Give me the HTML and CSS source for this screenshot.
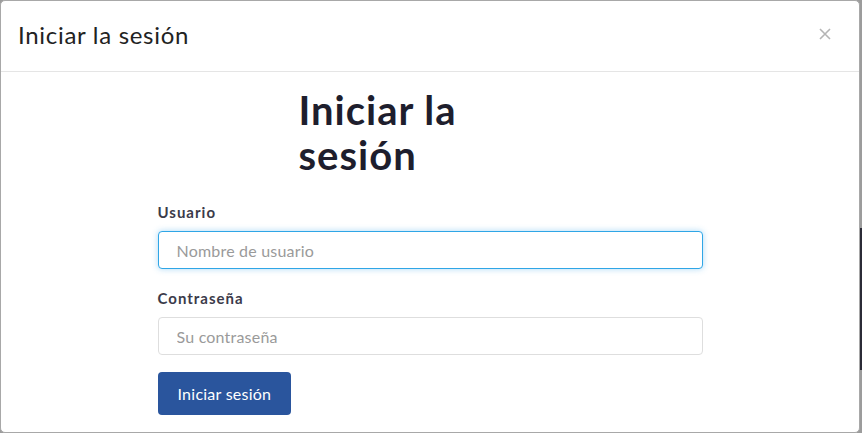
FILE: index.html
```html
<!DOCTYPE html>
<html lang="es">
<head>
    <meta charset="UTF-8">
    <meta name="viewport" content="width=device-width, initial-scale=1.0">
    <title>Iniciar la sesión</title>
    <link rel="stylesheet" href="styles.css">
</head>
<body>
    <div class="modal">
        <header class="modal-header">
            <h4 class="modal-title">Iniciar la sesión</h4>
            <button class="close" aria-label="Cerrar">
                <svg width="12" height="12" viewBox="0 0 12 12">
                    <path d="M1 1 L11 11 M11 1 L1 11" stroke="#b5b5b5" stroke-width="1.6" fill="none"/>
                </svg>
            </button>
        </header>

        <div class="modal-body">
            <div class="intro">
                <h1>Iniciar la sesión</h1>
            </div>

            <form class="login-form">
                <div class="field">
                    <label for="user">Usuario</label>
                    <input id="user" class="input focused" type="text" placeholder="Nombre de usuario">
                </div>
                <div class="field field-last">
                    <label for="pass">Contraseña</label>
                    <input id="pass" class="input" type="password" placeholder="Su contraseña">
                </div>
                <button type="button" class="btn-primary">Iniciar sesión</button>
            </form>
        </div>
    </div>

    <div class="backdrop-side">
        <div class="backdrop-dark"></div>
    </div>
</body>
</html>
```

FILE: styles.css
```css
body {
    margin: 0;
    height: 433px;
    overflow: hidden;
    display: flex;
    background: #9c9c9c;
    font-family: Lato, "Open Sans", sans-serif;
}
.modal {
    width: 860px;
    height: 433px;
    flex-shrink: 0;
    box-sizing: border-box;
    background: #fff;
    border: 1px solid #a8a8a8;
    border-radius: 5px;
    overflow: hidden;
}
.modal-header {
    height: 70px;
    padding: 0 28px 0 17px;
    display: flex;
    align-items: center;
    justify-content: space-between;
    border-bottom: 1px solid #e5e5e5;
}
.modal-title {
    margin: -3px 0 0;
    font-size: 24px;
    font-weight: 400;
    color: #222;
    letter-spacing: 0.7px;
}
.close {
    padding: 0;
    margin-top: -4px;
    border: none;
    background: none;
    cursor: pointer;
    display: flex;
}
.modal-body {
    padding-top: 16px;
}
.intro {
    width: 545px;
    margin: 0 auto;
    padding-left: 141px;
    box-sizing: border-box;
}
.intro h1 {
    margin: 0;
    max-width: 220px;
    font-size: 40px;
    line-height: 45px;
    font-weight: 700;
    letter-spacing: 1px;
    color: #1e1e2d;
}
.login-form {
    width: 545px;
    margin: 24px auto 0;
}
.field {
    margin-bottom: 19px;
}
.field-last {
    margin-bottom: 17px;
}
.field label {
    display: block;
    margin-bottom: 8px;
    font-size: 15px;
    line-height: 21px;
    font-weight: 700;
    letter-spacing: 1px;
    color: #3b3b4a;
}
.input {
    display: block;
    width: 100%;
    height: 38px;
    box-sizing: border-box;
    padding: 0 18px;
    font-family: Lato, "Open Sans", sans-serif;
    font-size: 16px;
    letter-spacing: 0.2px;
    color: #333;
    border: 1px solid #dedede;
    border-radius: 4px;
    outline: none;
}
.input::placeholder {
    color: #9a9a9a;
}
.input.focused {
    border-color: #2fa6e6;
    box-shadow: 0 0 6px rgba(70, 170, 235, 0.45);
}
.btn-primary {
    height: 43px;
    padding: 0 20px;
    font-family: Lato, "Open Sans", sans-serif;
    font-size: 16px;
    letter-spacing: 0.25px;
    color: #fff;
    background: #2a559d;
    border: none;
    border-radius: 4px;
    cursor: pointer;
}
.backdrop-side {
    flex: 1;
    padding-top: 228px;
}
.backdrop-dark {
    height: 142px;
    background: #2b2b36;
}
```
